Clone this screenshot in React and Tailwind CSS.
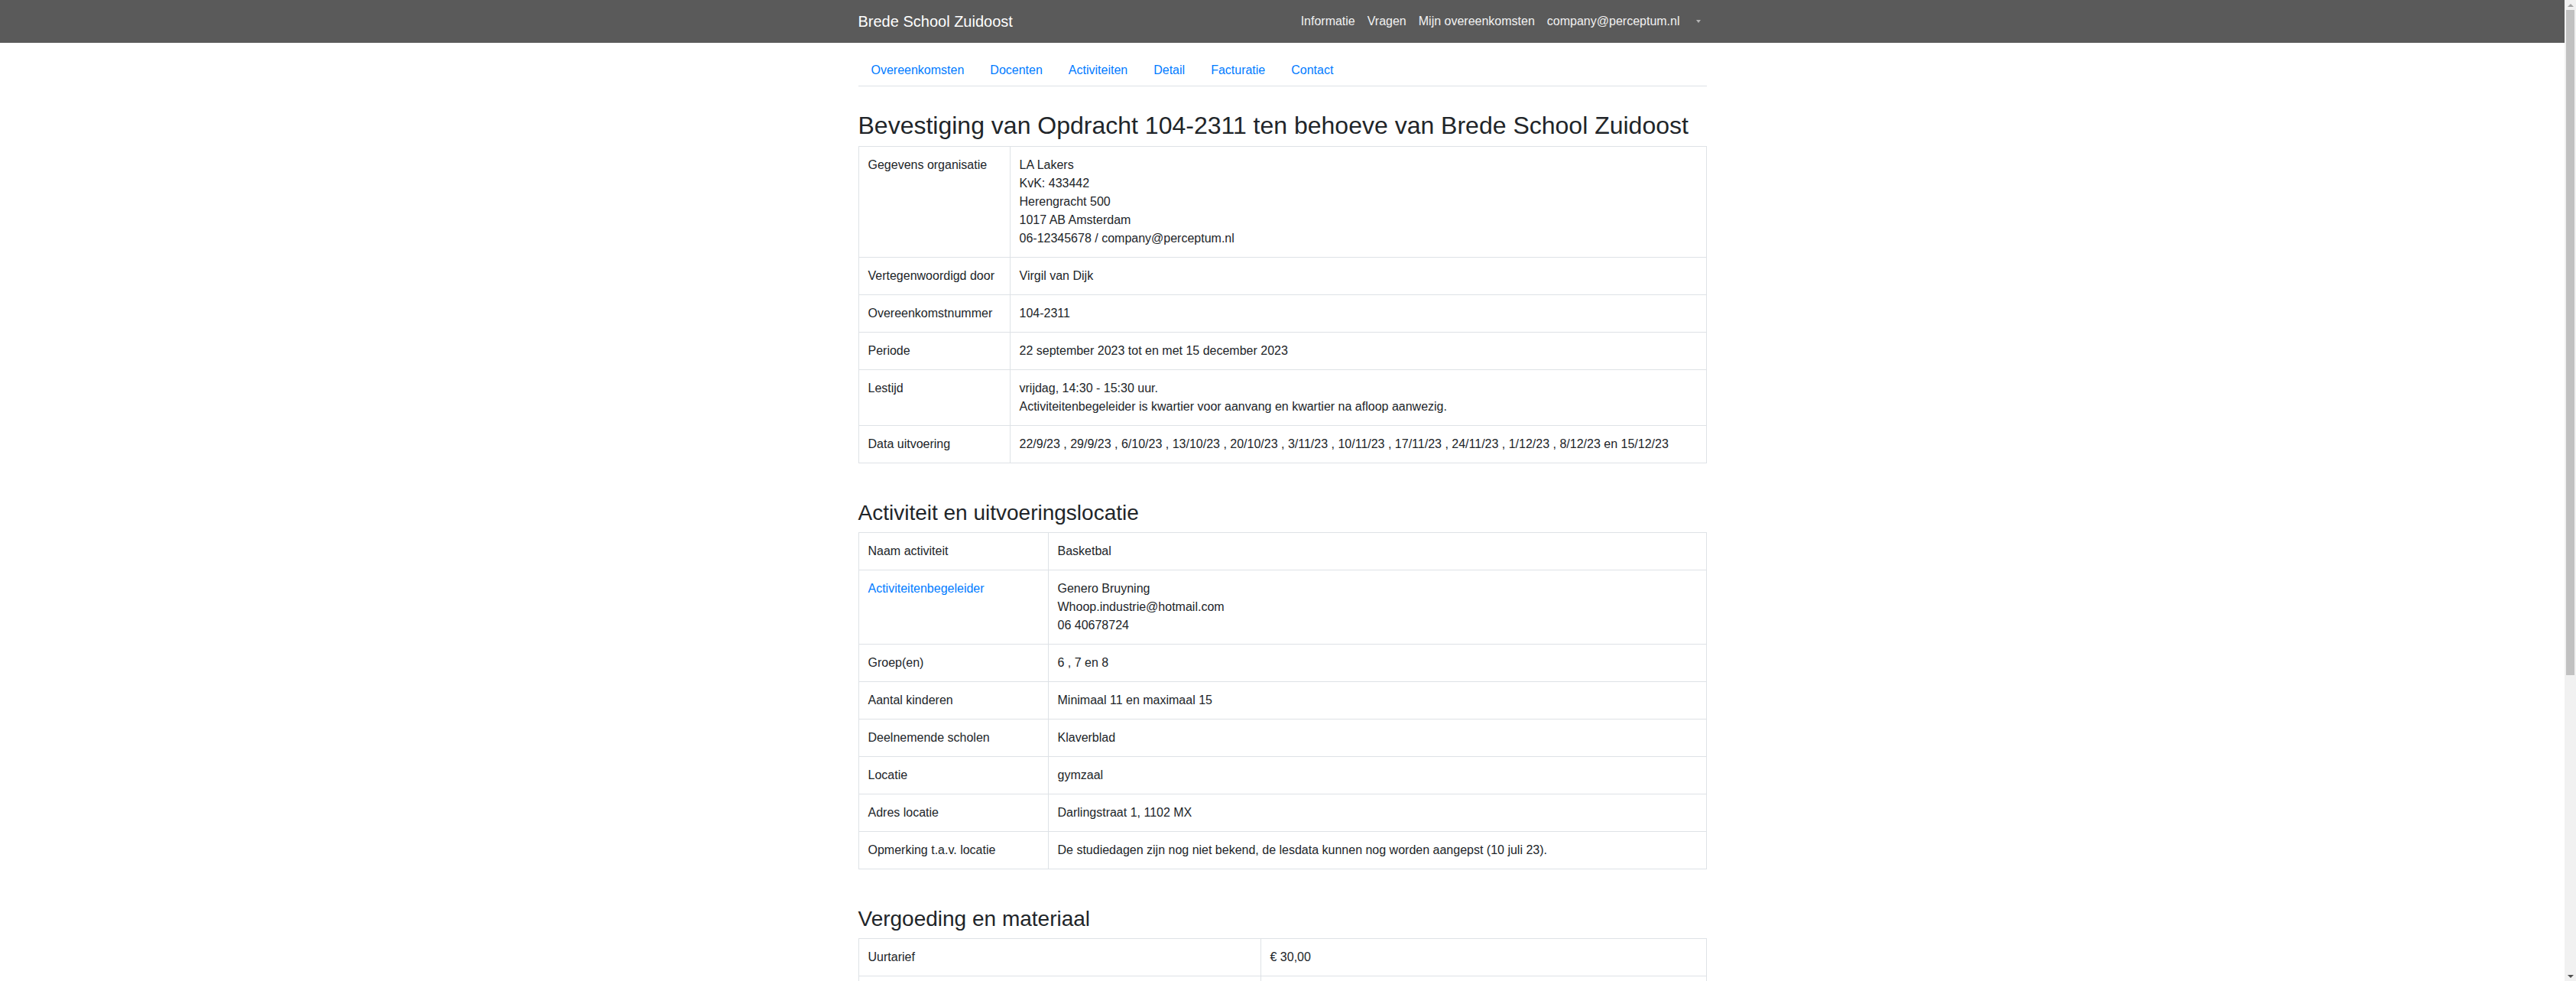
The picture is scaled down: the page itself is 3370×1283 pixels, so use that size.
import React from "react";

const tabs = ["Overeenkomsten", "Docenten", "Activiteiten", "Detail", "Facturatie", "Contact"];

const organisatie = [
  {
    label: "Gegevens organisatie",
    value: ["LA Lakers", "KvK: 433442", "Herengracht 500", "1017 AB Amsterdam", "06-12345678 / company@perceptum.nl"],
  },
  { label: "Vertegenwoordigd door", value: ["Virgil van Dijk"] },
  { label: "Overeenkomstnummer", value: ["104-2311"] },
  { label: "Periode", value: ["22 september 2023 tot en met 15 december 2023"] },
  {
    label: "Lestijd",
    value: [
      "vrijdag, 14:30 - 15:30 uur.",
      "Activiteitenbegeleider is kwartier voor aanvang en kwartier na afloop aanwezig.",
    ],
  },
  {
    label: "Data uitvoering",
    value: [
      "22/9/23 , 29/9/23 , 6/10/23 , 13/10/23 , 20/10/23 , 3/11/23 , 10/11/23 , 17/11/23 , 24/11/23 , 1/12/23 , 8/12/23 en 15/12/23",
    ],
  },
];

const activiteit = [
  { label: "Naam activiteit", value: ["Basketbal"] },
  {
    label: "Activiteitenbegeleider",
    link: true,
    value: ["Genero Bruyning", "Whoop.industrie@hotmail.com", "06 40678724"],
  },
  { label: "Groep(en)", value: ["6 , 7 en 8"] },
  { label: "Aantal kinderen", value: ["Minimaal 11 en maximaal 15"] },
  { label: "Deelnemende scholen", value: ["Klaverblad"] },
  { label: "Locatie", value: ["gymzaal"] },
  { label: "Adres locatie", value: ["Darlingstraat 1, 1102 MX"] },
  {
    label: "Opmerking t.a.v. locatie",
    value: ["De studiedagen zijn nog niet bekend, de lesdata kunnen nog worden aangepst (10 juli 23)."],
  },
];

const vergoeding = [
  { label: "Uurtarief", value: ["€ 30,00"] },
  { label: "Aantal lessen", value: ["12"] },
  { label: "Totaal lesuren", value: ["12 uur"] },
  { label: "Totaalbedrag", value: ["€ 360,00"] },
  { label: "Materiaal", value: ["Wordt door de activiteitenbegeleider verzorgd"] },
];

const ondertekening = [
  { label: "Plaats", value: ["Amsterdam"] },
  { label: "Datum", value: ["10 juli 2023"] },
  { label: "Status", value: ["Nog niet bevestigd"] },
];

const InfoTable = ({ rows, colClass }) => (
  <table className="w-full table-fixed border-collapse">
    <colgroup>
      <col className={colClass} />
      <col />
    </colgroup>
    <tbody>
      {rows.map((row, index) => (
        <tr key={index}>
          <td className="border border-[#dee2e6] p-3 align-top">
            {row.link ? <a className="text-[#007bff]">{row.label}</a> : row.label}
          </td>
          <td className="border border-[#dee2e6] p-3 align-top">
            {row.value.map((line, i) => (
              <div key={i}>{line}</div>
            ))}
          </td>
        </tr>
      ))}
    </tbody>
  </table>
);

const App = () => {
  return (
    <div className="flex min-h-screen items-start bg-white font-['Liberation_Sans',Arial,sans-serif] text-base leading-6 text-[#212529]">
      <div className="min-w-0 flex-1">
        {/* Navbar */}
        <nav className="bg-[#5a5a5a]">
          <div className="mx-auto flex h-14 w-[1140px] items-center justify-between px-[15px]">
            <a className="text-xl leading-[30px] text-white">Brede School Zuidoost</a>
            <ul className="flex items-center text-[#f2f2f2]">
              <li><a className="block px-2 py-2">Informatie</a></li>
              <li><a className="block px-2 py-2">Vragen</a></li>
              <li><a className="block px-2 py-2">Mijn overeenkomsten</a></li>
              <li><a className="block px-2 py-2">company@perceptum.nl</a></li>
              <li>
                <a className="flex items-center py-2 pl-[13px] pr-2">
                  <span className="inline-block h-0 w-0 border-x-[3.5px] border-t-[4px] border-x-transparent border-t-[#b4b4b4]" />
                </a>
              </li>
            </ul>
          </div>
        </nav>

        <main className="mx-auto w-[1140px] px-[15px] pb-[90px]">
          {/* Tabs */}
          <ul className="mt-4 flex border-b border-[#dee2e6]">
            {tabs.map((tab) => (
              <li key={tab}>
                <a className="block px-[17px] py-2 text-[#007bff]">{tab}</a>
              </li>
            ))}
          </ul>

          <h2 className="mt-8 mb-2 text-[32px] font-medium leading-[1.2]">
            Bevestiging van Opdracht 104-2311 ten behoeve van Brede School Zuidoost
          </h2>
          <InfoTable rows={organisatie} colClass="w-[198px]" />

          <h3 className="mt-12 mb-2 text-[28px] font-medium leading-[1.2]">Activiteit en uitvoeringslocatie</h3>
          <InfoTable rows={activiteit} colClass="w-[248px]" />

          <h3 className="mt-12 mb-2 text-[28px] font-medium leading-[1.2]">Vergoeding en materiaal</h3>
          <InfoTable rows={vergoeding} colClass="w-[526px]" />

          <h3 className="mt-12 mb-2 text-[28px] font-medium leading-[1.2]">Ondertekening</h3>
          <InfoTable rows={ondertekening} colClass="w-[198px]" />
        </main>
      </div>

      {/* Scrollbar strip */}
      <aside className="sticky top-0 flex h-screen w-[15px] shrink-0 flex-col items-center bg-[#f1f1f1]">
        <div className="flex h-[13px] items-center justify-center">
          <span className="h-0 w-0 border-x-[4px] border-b-[4px] border-x-transparent border-b-[#a3a3a3]" />
        </div>
        <div className="h-[870px] w-[11px] bg-[#c1c1c1]" />
        <div className="flex-1" />
        <div className="flex h-[13px] items-center justify-center">
          <span className="h-0 w-0 border-x-[4px] border-t-[4px] border-x-transparent border-t-[#505050]" />
        </div>
      </aside>
    </div>
  );
};

export default App;
